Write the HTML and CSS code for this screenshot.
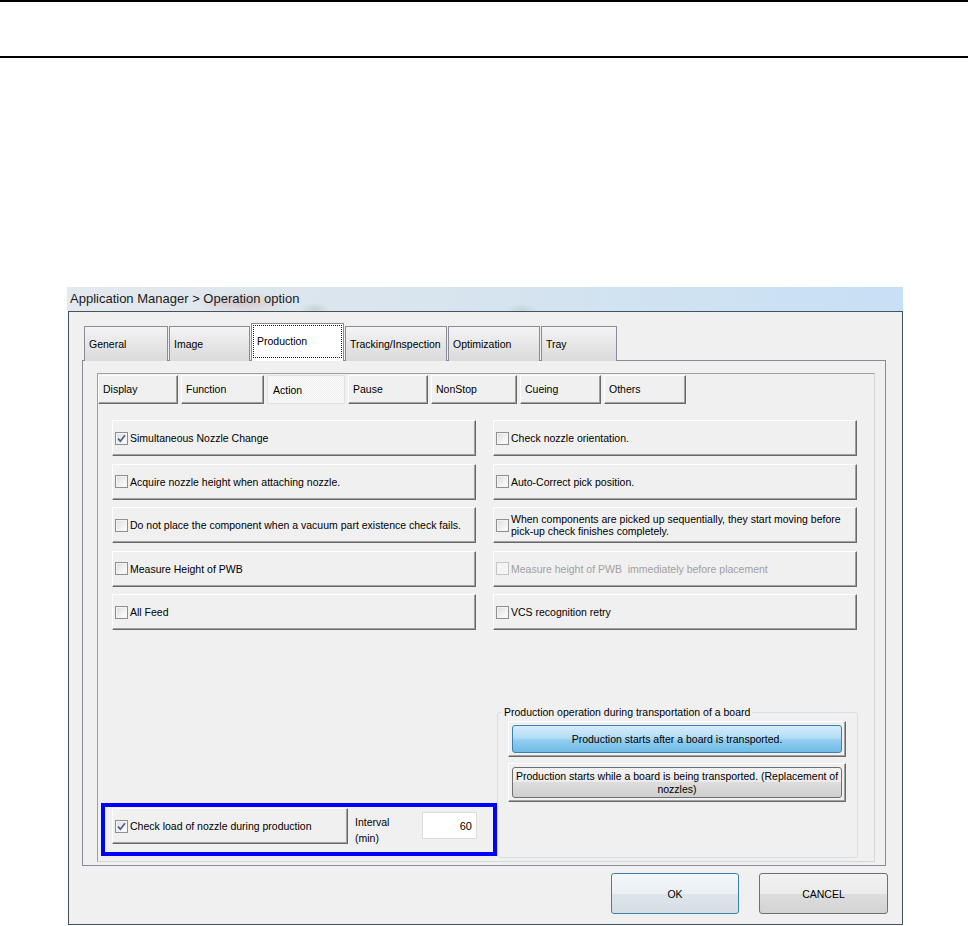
FILE: index.html
```html
<!DOCTYPE html>
<html lang="en">
<head>
    <meta charset="UTF-8">
    <title>Application Manager &gt; Operation option</title>
    <link rel="stylesheet" href="styles.css">
</head>
<body>
    <div class="page-head"></div>

    <div class="window">
        <div class="titlebar">Application Manager &gt; Operation option</div>

        <div class="window-body">
            <div class="tabs">
                <div class="tab">General</div>
                <div class="tab">Image</div>
                <div class="tab active"><span class="focus">Production</span></div>
                <div class="tab">Tracking/Inspection</div>
                <div class="tab">Optimization</div>
                <div class="tab">Tray</div>
            </div>

            <div class="tab-page">
                <div class="sub-page">
                    <div class="subtabs">
                        <div class="subtab">Display</div>
                        <div class="subtab">Function</div>
                        <div class="subtab active">Action</div>
                        <div class="subtab">Pause</div>
                        <div class="subtab">NonStop</div>
                        <div class="subtab">Cueing</div>
                        <div class="subtab">Others</div>
                    </div>

                    <div class="options">
                        <label class="opt"><span class="cb checked"><svg viewBox="0 0 11 11"><path d="M2 5.6 L4.4 8.2 L9 2.2"/></svg></span>Simultaneous Nozzle Change</label>
                        <label class="opt"><span class="cb"></span>Check nozzle orientation.</label>
                        <label class="opt"><span class="cb"></span>Acquire nozzle height when attaching nozzle.</label>
                        <label class="opt"><span class="cb"></span>Auto-Correct pick position.</label>
                        <label class="opt"><span class="cb"></span>Do not place the component when a vacuum part existence check fails.</label>
                        <label class="opt two-line"><span class="cb"></span><span>When components are picked up sequentially, they start moving before<br>pick-up check finishes completely.</span></label>
                        <label class="opt"><span class="cb"></span>Measure Height of PWB</label>
                        <label class="opt disabled"><span class="cb"></span>Measure height of PWB&nbsp; immediately before placement</label>
                        <label class="opt"><span class="cb"></span>All Feed</label>
                        <label class="opt"><span class="cb"></span>VCS recognition retry</label>
                    </div>

                    <div class="lower">
                        <div class="highlight">
                            <label class="opt wide"><span class="cb checked"><svg viewBox="0 0 11 11"><path d="M2 5.6 L4.4 8.2 L9 2.2"/></svg></span>Check load of nozzle during production</label>
                            <div class="interval">Interval<br>(min)</div>
                            <input class="num-input" type="text" value="60" readonly>
                        </div>

                        <fieldset class="group">
                            <legend>Production operation during transportation of a board</legend>
                            <div class="choice">
                                <div class="btn-blue">Production starts after a board is transported.</div>
                            </div>
                            <div class="choice">
                                <div class="btn-gray">Production starts while a board is being transported. (Replacement of<br>nozzles)</div>
                            </div>
                        </fieldset>
                    </div>
                </div>
            </div>

            <div class="dialog-actions">
                <button class="dlg-btn ok">OK</button>
                <button class="dlg-btn">CANCEL</button>
            </div>
        </div>
    </div>
</body>
</html>
```

FILE: styles.css
```css
body {
    margin: 0;
    background: #fff;
    color: #000;
    font-family: "Liberation Sans", Arial, sans-serif;
    font-size: 10.5px;
}
.page-head {
    height: 54px;
    margin-right: 2px;
    border-top: 2px solid #000;
    border-bottom: 2px solid #000;
}

/* window frame */
.window {
    width: 836px;
    margin: 229px 0 0 67px;
}
.titlebar {
    height: 24px;
    line-height: 24px;
    padding-left: 3px;
    font-size: 13px;
    color: #1b1b1b;
    background:
        radial-gradient(ellipse 45px 11px at 175px 16px, rgba(200, 120, 110, 0.28), transparent),
        radial-gradient(ellipse 14px 6px at 248px 22px, rgba(110, 160, 120, 0.25), transparent),
        radial-gradient(ellipse 16px 6px at 455px 23px, rgba(110, 160, 120, 0.2), transparent),
        linear-gradient(90deg, #e4e9ee 0%, #dbe5ed 35%, #d3e3f0 60%, #c7e0f5 100%);
}
.window-body {
    margin-left: 1px;
    border: 1px solid #46535f;
    background: #f0f0f0;
    padding: 11px 14px 10px 13px;
}

/* main tabs */
.tabs {
    display: grid;
    grid-template-columns: 84px 81px 93px 102px 92px 76px;
    column-gap: 1px;
    align-items: end;
    height: 38px;
    padding-left: 2px;
    margin-bottom: -1px;
    position: relative;
    z-index: 1;
}
.tab {
    height: 35px;
    box-sizing: border-box;
    border: 1px solid #898c95;
    border-bottom: none;
    background: linear-gradient(#f4f4f4, #e4e4e4 60%, #dadada);
    padding-left: 4px;
    line-height: 35px;
    white-space: nowrap;
}
.tab.active {
    height: 38px;
    background: #fff;
    padding: 1px 1px 3px 1px;
    line-height: normal;
}
.tab .focus {
    display: block;
    height: 33px;
    box-sizing: border-box;
    border: 1px dotted #222;
    padding-left: 3px;
    line-height: 30px;
}
.tab-page {
    height: 506px;
    box-sizing: border-box;
    margin-right: 2px;
    border: 1px solid #898c95;
    background: #f0f0f0;
    padding: 12px 10px 3px 14px;
    display: flex;
}

/* inner tab page */
.sub-page {
    flex: 1;
    border: 1px solid #a0a0a0;
    border-right-color: #d6d6d6;
    border-bottom-color: #d6d6d6;
    display: flex;
    flex-direction: column;
}
.subtabs {
    display: grid;
    grid-template-columns: 80px 83px 78px 80px 86px 81px 82px;
    column-gap: 3px;
    margin-top: 1px;
    height: 28px;
}
.subtab {
    box-sizing: border-box;
    border: 1px solid;
    border-color: #fff #696969 #696969 #fff;
    box-shadow: inset -1px -1px #a0a0a0;
    background: #f0f0f0;
    padding-left: 4px;
    line-height: 26px;
}
.subtab.active {
    border-color: #e2e2e2;
    box-shadow: none;
    background: repeating-conic-gradient(#fbfbfb 0 25%, #efefef 0 50%) 0 0 / 2px 2px;
    padding: 1px 0 0 5px;
}

/* option rows */
.options {
    display: grid;
    grid-template-columns: 364px 364px;
    grid-auto-rows: 36px;
    column-gap: 17px;
    row-gap: 7.5px;
    margin: 17px 0 0 14px;
}
.opt {
    display: flex;
    align-items: center;
    gap: 2px;
    box-sizing: border-box;
    border: 1px solid;
    border-color: #fff #696969 #696969 #fff;
    box-shadow: inset -1px -1px #a0a0a0;
    background: #f0f0f0;
    padding-left: 2px;
    white-space: nowrap;
}
.opt.two-line {
    line-height: 12px;
}
.opt.disabled {
    color: #a0a0a0;
}
.cb {
    flex: none;
    width: 13px;
    height: 13px;
    box-sizing: border-box;
    border: 1px solid #8e8f8f;
    background: linear-gradient(135deg, #dcdcdc, #f6f6f6 70%, #fff);
    box-shadow: inset 0 0 0 1px #f4f4f4;
}
.cb svg {
    display: block;
    width: 11px;
    height: 11px;
}
.cb svg path {
    fill: none;
    stroke: #4a6290;
    stroke-width: 1.8;
}
.opt.disabled .cb {
    border-color: #c6c6c6;
    background: #f4f4f4;
}

/* lower area */
.lower {
    margin: auto 16px 3px 3px;
    display: flex;
    justify-content: space-between;
    align-items: flex-end;
}
.highlight {
    width: 396px;
    height: 53px;
    box-sizing: border-box;
    border: 4px solid #0000ff;
    padding: 1px 16px 0 7px;
    display: flex;
    align-items: flex-start;
    margin-bottom: 2px;
}
.opt.wide {
    width: 236px;
    height: 36px;
    flex: none;
}
.interval {
    width: 67px;
    margin: 6px 0 0 7px;
    line-height: 16px;
}
.num-input {
    width: 55px;
    height: 27px;
    box-sizing: border-box;
    margin: 4px 0 0;
    border: 1px solid #dcdcdc;
    background: #fff;
    padding: 0 4px 0 0;
    text-align: right;
    font-family: "Liberation Sans", Arial, sans-serif;
    font-size: 11px;
    color: #000;
}
.group {
    width: 361px;
    box-sizing: border-box;
    margin: 0;
    border: 1px solid #d5dfe5;
    border-radius: 3px;
    padding: 2px 11px 55px 10px;
}
.group legend {
    margin-left: -6px;
    padding: 0 2px;
    line-height: 13px;
}
.choice {
    border: 1px solid;
    border-color: #fff #696969 #696969 #fff;
    box-shadow: inset -1px -1px #a0a0a0;
    padding: 3px;
}
.choice + .choice {
    margin-top: 6px;
}
.btn-blue {
    height: 28px;
    box-sizing: border-box;
    border: 1px solid #3c7fb1;
    border-radius: 3px;
    background: linear-gradient(#d4edfb, #b3ddf5 45%, #92cef0 55%, #6fbbe6);
    text-align: center;
    line-height: 26px;
}
.btn-gray {
    height: 31px;
    box-sizing: border-box;
    border: 1px solid #707070;
    border-radius: 3px;
    background: linear-gradient(#f2f2f2, #ebebeb 50%, #dddddd 50%, #cfcfcf);
    text-align: center;
    line-height: 13px;
    padding-top: 2px;
}

/* dialog buttons */
.dialog-actions {
    display: flex;
    justify-content: flex-end;
    gap: 20px;
    margin-top: 7px;
}
.dlg-btn {
    width: 129px;
    height: 41px;
    border: 1px solid #707070;
    border-radius: 3px;
    background: linear-gradient(#f2f2f2, #ebebeb 50%, #dddddd 50%, #d3d3d3);
    font-family: "Liberation Sans", Arial, sans-serif;
    font-size: 10.5px;
    color: #000;
    padding: 0;
}
.dlg-btn.ok {
    width: 128px;
    border-color: #3c7fb1;
    background: linear-gradient(#f3f7fa, #eaf0f4 50%, #dde5eb 50%, #d6dfe6);
}
```
